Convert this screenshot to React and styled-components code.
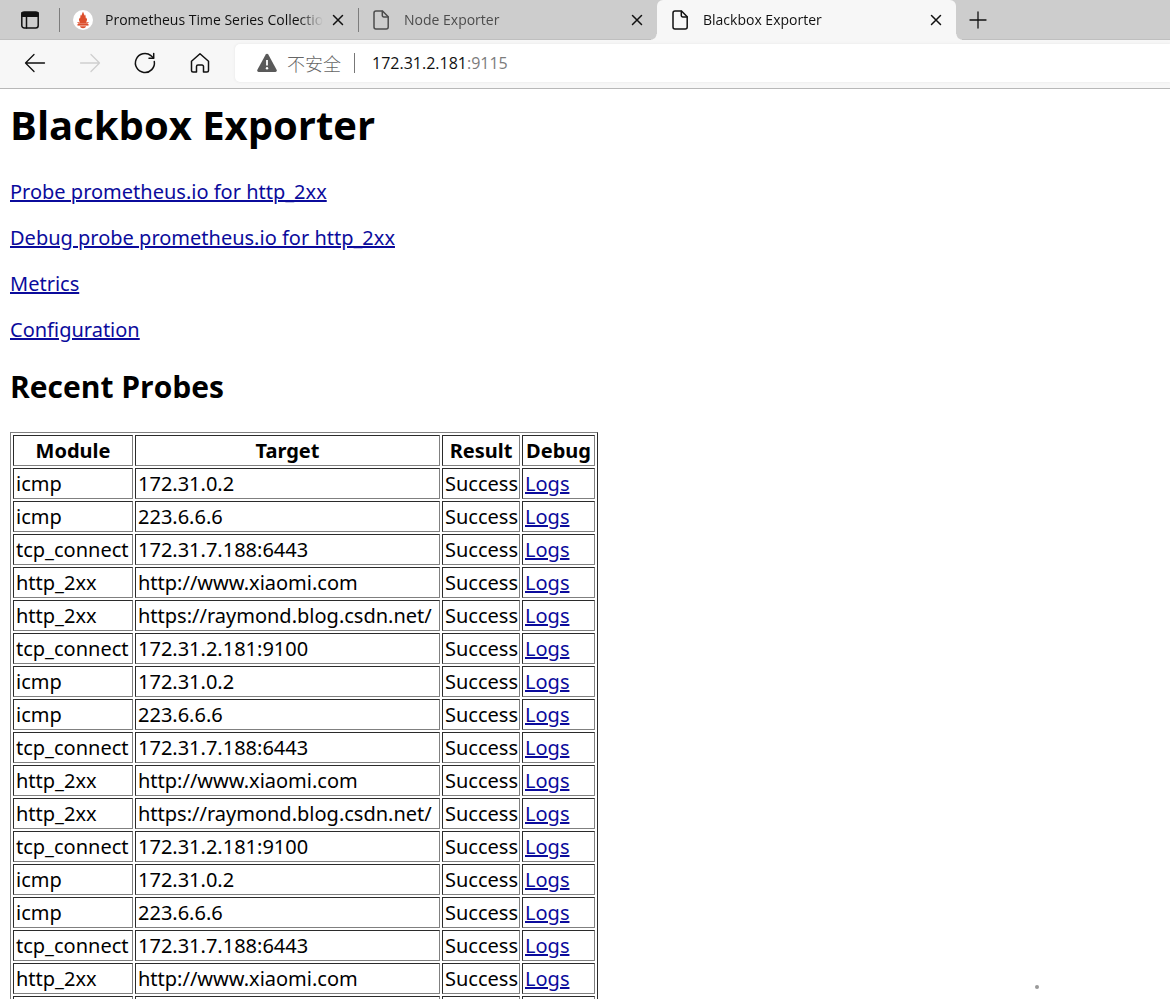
import React from "react";
import styled, { createGlobalStyle, css } from "styled-components";

const GlobalStyle = createGlobalStyle`
  *, *::before, *::after { box-sizing: border-box; }
  body {
    margin: 0;
    background: #fff;
    color: #000;
    font-family: "Open Sans", "Noto Sans", "Noto Sans CJK SC", sans-serif;
  }
`;

const Window = styled.div`
  display: flex;
  flex-direction: column;
  height: 100vh;
  overflow: hidden;
`;

const iconButton = css`
  display: inline-flex;
  align-items: center;
  justify-content: center;
  flex: none;
  padding: 0;
  border: 0;
  background: none;
  color: #111;
`;

const TabStrip = styled.header`
  display: flex;
  align-items: stretch;
  flex: none;
  height: 40px;
  background: #cdcdcd;
  box-shadow: inset 0 -1px 0 #bfbfbf;
`;

const TabMenuButton = styled.button`
  ${iconButton}
  width: 59px;
`;

const Tabs = styled.nav`
  display: flex;
  flex: 0 1 897px;
  min-width: 0;
`;

const Tab = styled.div`
  position: relative;
  display: flex;
  align-items: center;
  flex: 1 1 0;
  min-width: 0;
  padding: 0 11px 0 14px;
  color: ${(p) => (p.$muted ? "#4c4c4c" : "#111")};

  ${(p) =>
    p.$divider &&
    css`
      &::before {
        content: "";
        position: absolute;
        left: 0;
        top: 8px;
        width: 1px;
        height: 24px;
        background: #7d7d7d;
      }
    `}

  ${(p) =>
    p.$active &&
    css`
      background: #f7f7f7;
      border-radius: 6px 6px 0 0;

      &::before,
      &::after {
        content: "";
        position: absolute;
        bottom: 0;
        width: 6px;
        height: 6px;
      }
      &::before {
        right: 100%;
        background: radial-gradient(circle at 0 0, transparent 5px, #f7f7f7 6px);
      }
      &::after {
        left: 100%;
        background: radial-gradient(circle at 100% 0, transparent 5px, #f7f7f7 6px);
      }
    `}
`;

const TabButton = styled.button`
  display: flex;
  align-items: center;
  flex: 1;
  min-width: 0;
  gap: 12px;
  height: 100%;
  padding: 0;
  border: 0;
  background: none;
  color: inherit;
  font: inherit;
  font-size: 14px;
  line-height: 20px;
  text-align: left;

  svg { flex: none; }
`;

const TabTitle = styled.span`
  flex: 1;
  min-width: 0;
  overflow: hidden;
  white-space: nowrap;
  mask-image: linear-gradient(to right, #000 calc(100% - 24px), transparent);
`;

const CloseButton = styled.button`
  ${iconButton}
  width: 18px;
  height: 24px;
  margin-left: 6px;
`;

const NewTabButton = styled.button`
  ${iconButton}
  width: 44px;
`;

const Toolbar = styled.div`
  display: flex;
  align-items: center;
  flex: none;
  height: 49px;
  padding: 0 0 2px 7px;
  border-bottom: 1px solid #b8b8b8;
  background: #f7f7f7;
`;

const ToolButton = styled.button`
  ${iconButton}
  width: 55px;
  height: 40px;
  &:disabled { color: #cfcfcf; }
`;

const AddressBar = styled.form`
  display: flex;
  align-items: center;
  flex: 1;
  min-width: 0;
  height: 38px;
  margin-left: 8px;
  padding-left: 22px;
  border-radius: 5px 0 0 5px;
  background: #fff;
  box-shadow: 0 0 3px #e4e4e4;
  font-size: 16px;
  line-height: 24px;
`;

const SecurityButton = styled.button`
  ${iconButton}
  gap: 10px;
  color: #666;
  font-family: "Noto Sans CJK SC", sans-serif;
  font-size: 18px;
  font-weight: 300;
  line-height: 24px;
`;

const Divider = styled.span`
  width: 1px;
  height: 20px;
  margin: 0 17px 0 13px;
  background: #777;
`;

const AddressInput = styled.input`
  field-sizing: content;
  padding: 0;
  border: 0;
  outline: 0;
  background: none;
  color: ${(p) => (p.$muted ? "#7c7c7c" : "#111")};
  font: inherit;
`;

const Page = styled.main`
  position: relative;
  flex: 1;
  min-height: 0;
  padding: 6px 10px;
  overflow: auto;
  scrollbar-width: none;
  font-family: "Noto Sans", "Open Sans", sans-serif;
  font-size: 20px;
  line-height: 27px;
`;

const Title = styled.h1`
  margin: 0 0 23px;
  font-family: "Open Sans", sans-serif;
  font-size: 40px;
  line-height: 60px;
`;

const Subtitle = styled.h2`
  margin: 24px 0 25px;
  font-family: "Open Sans", sans-serif;
  font-size: 30px;
  line-height: 40px;
`;

const Link = styled.a`
  color: #0b0b9c;
  text-decoration: underline;
`;

const LinkLine = styled.p`
  margin: 0 0 19px;
`;

const Table = styled.table`
  border: 1px solid;
  border-color: #808080 #2b2b2b #2b2b2b #808080;
  border-spacing: 2px;
  table-layout: fixed;
  width: 588px;
`;

const Col = styled.col`
  width: ${(p) => p.$width}px;
`;

const Cell = styled.td`
  padding: 1px 2px;
  border: 1px solid;
  border-color: #2b2b2b #808080 #808080 #2b2b2b;
  white-space: nowrap;
`;

const HeadCell = styled(Cell)`
  padding: 1px 0;
  font-weight: 700;
  text-align: center;
`;

const Speck = styled.span`
  position: fixed;
  right: 131px;
  bottom: 10px;
  width: 4px;
  height: 4px;
  border-radius: 50%;
  background: #999;
`;

const Icon = ({ size = 24, children, ...rest }) => (
  <svg
    width={size}
    height={size}
    viewBox={`0 0 ${size} ${size}`}
    fill="none"
    stroke="currentColor"
    strokeWidth="1.5"
    strokeLinecap="round"
    strokeLinejoin="round"
    aria-hidden="true"
    {...rest}
  >
    {children}
  </svg>
);

const TabMenuIcon = () => (
  <Icon size={20}>
    <rect x="1.8" y="2" width="16.4" height="16" rx="2.5" />
    <path d="M2 2.8h16v3.4H2z" fill="currentColor" />
    <path d="M6.5 6v12" />
  </Icon>
);

const PrometheusIcon = () => (
  <svg width="20" height="20" viewBox="0 0 20 20" aria-hidden="true">
    <circle cx="10" cy="10" r="10" fill="#fff" />
    <g fill="#dc4e2c">
      <path d="M10 1.8c.9 1.3.9 2.7 1.5 4 .3-.5.4-1 .4-1.6 1.1 1.7.5 3.2 1.2 4.7.3-.4.5-.8.5-1.3 1 1.8.2 3.4-.5 4.9l2.7-.6c-.3.8-.8 1.4-1.4 1.9H5.6c-.6-.5-1.1-1.1-1.4-1.9l2.7.6C6.2 11 5.4 9.4 6.4 7.6c0 .5.2.9.5 1.3.7-1.5.1-3 1.2-4.700 0 .6.1 1.1.4 1.6.6-1.3.6-2.7 1.5-4z" />
      <rect x="4.500" y="14" width="11" height="1.600" />
      <path d="M7 16.300h6c-.2 1.200-1.400 2-3 2s-2.800-.8-3-2z" />
    </g>
  </svg>
);

const PageIcon = () => (
  <Icon size={20}>
    <path d="M4 1h6.500L16.200 6.800V17a2 2 0 0 1-2 2H4a2 2 0 0 1-2-2V3a2 2 0 0 1 2-2z" />
    <path d="M10.300 1.200V5.500a1.500 1.500 0 0 0 1.500 1.500h4.200" />
  </Icon>
);

const CloseIcon = () => (
  <Icon size={12}>
    <path d="M1.500 1.500l9 9M10.500 1.500l-9 9" />
  </Icon>
);

const PlusIcon = () => (
  <Icon size={18} strokeWidth="1.3">
    <path d="M9 1v16M1 9h16" />
  </Icon>
);

const BackIcon = () => (
  <Icon strokeWidth="1.3">
    <path d="M21.500 12h-19M11 3.500L2.500 12l8.500 8.500" />
  </Icon>
);

const ForwardIcon = () => (
  <Icon strokeWidth="1.3">
    <path d="M2.500 12h19M13 3.500l8.500 8.500-8.500 8.500" />
  </Icon>
);

const RefreshIcon = () => (
  <Icon>
    <path d="M21.300 10.500A9.500 9.500 0 1 1 18 4.700l2.500 2.300" />
    <path d="M20.700 2.500V7.200H16" />
  </Icon>
);

const HomeIcon = () => (
  <Icon>
    <path d="M3.500 10.200L12 2.800l8.500 7.400v9.300a1.500 1.500 0 0 1-1.500 1.500h-3.500v-5.500a1.500 1.500 0 0 0-1.500-1.500h-4a1.500 1.500 0 0 0-1.500 1.500V21H5a1.500 1.500 0 0 1-1.500-1.500z" />
  </Icon>
);

const WarningIcon = () => (
  <svg width="20" height="20" viewBox="0 0 20 20" aria-hidden="true">
    <path d="M8.700 1.600a1.500 1.500 0 0 1 2.600 0l8.300 15.200a1.500 1.500 0 0 1-1.300 2.200H1.700a1.500 1.500 0 0 1-1.300-2.200z" fill="#595959" />
    <path d="M10 7v5.500" stroke="#fff" strokeWidth="1.800" />
    <circle cx="10" cy="15.300" r="1.200" fill="#fff" />
  </svg>
);

const tabs = [
  { title: "Prometheus Time Series Collection", icon: <PrometheusIcon />, divider: true },
  { title: "Node Exporter", icon: <PageIcon />, divider: true, muted: true },
  { title: "Blackbox Exporter", icon: <PageIcon />, active: true },
];

const links = [
  "Probe prometheus.io for http_2xx",
  "Debug probe prometheus.io for http_2xx",
  "Metrics",
  "Configuration",
];

const targets = [
  ["icmp", "172.31.0.2"],
  ["icmp", "223.6.6.6"],
  ["tcp_connect", "172.31.7.188:6443"],
  ["http_2xx", "http://www.xiaomi.com"],
  ["http_2xx", "https://raymond.blog.csdn.net/"],
  ["tcp_connect", "172.31.2.181:9100"],
];

const probes = [...targets, ...targets, ...targets];

export default function App() {
  return (
    <Window>
      <GlobalStyle />
      <TabStrip>
        <TabMenuButton aria-label="Tab actions"><TabMenuIcon /></TabMenuButton>
        <Tabs aria-label="Tabs">
          {tabs.map((t) => (
            <Tab key={t.title} $active={t.active} $divider={t.divider} $muted={t.muted}>
              <TabButton>
                {t.icon}
                <TabTitle>{t.title}</TabTitle>
              </TabButton>
              <CloseButton aria-label={`Close ${t.title}`}><CloseIcon /></CloseButton>
            </Tab>
          ))}
        </Tabs>
        <NewTabButton aria-label="New tab"><PlusIcon /></NewTabButton>
      </TabStrip>
      <Toolbar>
        <ToolButton aria-label="Back"><BackIcon /></ToolButton>
        <ToolButton aria-label="Forward" disabled><ForwardIcon /></ToolButton>
        <ToolButton aria-label="Refresh"><RefreshIcon /></ToolButton>
        <ToolButton aria-label="Home"><HomeIcon /></ToolButton>
        <AddressBar>
          <SecurityButton type="button"><WarningIcon />不安全</SecurityButton>
          <Divider />
          <AddressInput aria-label="Host" defaultValue="172.31.2.181" />
          <AddressInput aria-label="Port" defaultValue=":9115" $muted />
        </AddressBar>
      </Toolbar>
      <Page>
        <Title>Blackbox Exporter</Title>
        {links.map((text) => (
          <LinkLine key={text}><Link href="#">{text}</Link></LinkLine>
        ))}
        <Subtitle>Recent Probes</Subtitle>
        <Table>
          <colgroup>
            <Col $width={120} />
            <Col $width={305} />
            <Col $width={78} />
            <Col />
          </colgroup>
          <thead>
            <tr>
              {["Module", "Target", "Result", "Debug"].map((name) => (
                <HeadCell as="th" key={name}>{name}</HeadCell>
              ))}
            </tr>
          </thead>
          <tbody>
            {probes.map(([module, target], i) => (
              <tr key={i}>
                <Cell>{module}</Cell>
                <Cell>{target}</Cell>
                <Cell>Success</Cell>
                <Cell><Link href="#">Logs</Link></Cell>
              </tr>
            ))}
          </tbody>
        </Table>
        <Speck />
      </Page>
    </Window>
  );
}
